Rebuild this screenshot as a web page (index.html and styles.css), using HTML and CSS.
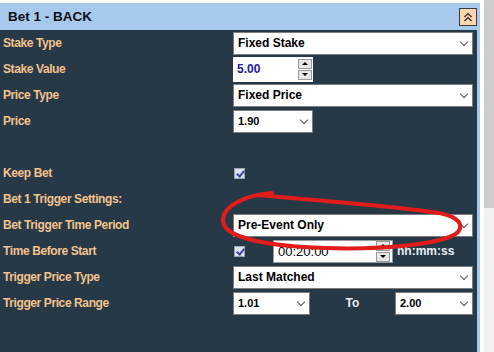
FILE: index.html
```html
<!DOCTYPE html>
<html lang="en">
<head>
    <meta charset="UTF-8">
    <title>Bet 1 - BACK</title>
    <link rel="stylesheet" href="styles.css">
</head>
<body>

    <div class="page">
        <div class="panel">
            <div class="panel-head">
                <span class="panel-title">Bet 1 - BACK</span>
                <span class="collapse-btn">
                    <svg width="10" height="12" viewBox="0 0 10 12"><path d="M1.5 6 L5 2.5 L8.5 6 M1.5 10 L5 6.5 L8.5 10" fill="none" stroke="#222" stroke-width="1.2"/></svg>
                </span>
            </div>

            <div class="panel-body">
                <div class="row">
                    <div class="label">Stake Type</div>
                    <div class="field"><div class="select wide">Fixed Stake<span class="chev"></span></div></div>
                </div>
                <div class="row">
                    <div class="label">Stake Value</div>
                    <div class="field">
                        <div class="number">
                            <span class="num-value">5.00</span>
                            <span class="spin">
                                <span class="spin-btn"><span class="tri up"></span></span>
                                <span class="spin-btn"><span class="tri down"></span></span>
                            </span>
                        </div>
                    </div>
                </div>
                <div class="row">
                    <div class="label">Price Type</div>
                    <div class="field"><div class="select wide">Fixed Price<span class="chev"></span></div></div>
                </div>
                <div class="row">
                    <div class="label">Price</div>
                    <div class="field"><div class="select small">1.90<span class="chev"></span></div></div>
                </div>
                <div class="row"></div>
                <div class="row">
                    <div class="label">Keep Bet</div>
                    <div class="field"><span class="check"></span></div>
                </div>
                <div class="row">
                    <div class="label">Bet 1 Trigger Settings:</div>
                </div>
                <div class="row">
                    <div class="label">Bet Trigger Time Period</div>
                    <div class="field"><div class="select wide">Pre-Event Only<span class="chev"></span></div></div>
                </div>
                <div class="row">
                    <div class="label">Time Before Start</div>
                    <div class="field">
                        <span class="check"></span>
                        <div class="time">
                            <span class="time-value">00:20:00</span>
                            <span class="spin">
                                <span class="spin-btn"><span class="tri up"></span></span>
                                <span class="spin-btn"><span class="tri down"></span></span>
                            </span>
                        </div>
                        <span class="hint">hh:mm:ss</span>
                    </div>
                </div>
                <div class="row">
                    <div class="label">Trigger Price Type</div>
                    <div class="field"><div class="select wide">Last Matched<span class="chev"></span></div></div>
                </div>
                <div class="row">
                    <div class="label">Trigger Price Range</div>
                    <div class="field">
                        <div class="select range">1.01<span class="chev"></span></div>
                        <span class="to">To</span>
                        <div class="select range-end">2.00<span class="chev"></span></div>
                    </div>
                </div>
            </div>
        </div>
        <div class="gutter"></div>
        <div class="scrollbar"><div class="thumb"></div></div>
    </div>

    <!-- hand-drawn annotation -->
    <svg class="scribble" width="494" height="352" viewBox="0 0 494 352">
        <path d="M272 193 C244 195 222 207 223 221 C224 238 268 246 325 248 C382 250 446 244 458 232 C466 222 452 214 432 212 C382 205 322 201 258 195"
              fill="none" stroke="#e21b1b" stroke-width="4" stroke-linecap="round"/>
    </svg>

</body>
</html>
```

FILE: styles.css
```css
body {
    margin: 0;
    font-family: "Liberation Sans", Arial, sans-serif;
    background: #fff;
    width: 494px;
    height: 352px;
    overflow: hidden;
    position: relative;
}
.page {
    display: flex;
    height: 352px;
}
.panel {
    width: 477px;
    margin-top: 3px;
    border-right: 3px solid #a8c9ee;
    background: #273947;
    display: flex;
    flex-direction: column;
}
.panel-head {
    height: 27px;
    background: #a8c9ee;
    display: flex;
    align-items: center;
    justify-content: space-between;
    padding: 0 3px 0 8px;
    margin-right: -3px;
}
.panel-title {
    font-size: 13.5px;
    font-weight: bold;
    color: #111;
}
.collapse-btn {
    width: 16px;
    height: 16px;
    border: 1px solid #3c3c3c;
    background: #fdd5b0;
    display: flex;
    align-items: center;
    justify-content: center;
}
.panel-body {
    display: flex;
    flex-direction: column;
}
.row {
    height: 26px;
    display: flex;
    align-items: center;
}
.label {
    width: 230px;
    padding-left: 3px;
    font-size: 12px;
    letter-spacing: -0.4px;
    font-weight: bold;
    color: #f3c38e;
}
.field {
    display: flex;
    align-items: center;
    height: 26px;
}
.select {
    box-sizing: border-box;
    height: 23px;
    background: #fff;
    border: 1px solid #7c7c7c;
    padding-left: 4px;
    display: flex;
    align-items: center;
    font-size: 12px;
    font-weight: bold;
    color: #000;
    position: relative;
}
.select.wide { width: 240px; }
.select.small { width: 80px; font-size: 11px; }
.select.range { width: 77px; font-size: 11px; }
.select.range-end { width: 78px; font-size: 11px; }
.chev {
    position: absolute;
    right: 5px;
    top: 6px;
    width: 5px;
    height: 5px;
    border-right: 1px solid #555;
    border-bottom: 1px solid #555;
    transform: rotate(45deg);
}
.number {
    box-sizing: border-box;
    width: 80px;
    height: 25px;
    background: #fff;
    display: flex;
    align-items: center;
    justify-content: space-between;
    padding: 0 1px 0 4px;
}
.num-value {
    font-size: 12px;
    font-weight: bold;
    color: #1f1a9a;
}
.spin {
    display: flex;
    flex-direction: column;
    gap: 1px;
}
.spin-btn {
    box-sizing: border-box;
    width: 14px;
    height: 10px;
    border: 1px solid #9a9a9a;
    background: #e6e6e6;
    display: flex;
    align-items: center;
    justify-content: center;
}
.tri {
    width: 0;
    height: 0;
    border-left: 3px solid transparent;
    border-right: 3px solid transparent;
}
.tri.up { border-bottom: 3px solid #000; }
.tri.down { border-top: 3px solid #000; }
.check {
    box-sizing: border-box;
    width: 11px;
    height: 11px;
    margin-left: 1px;
    border: 1px solid #9aa3b5;
    background: #dfe3ea;
    position: relative;
}
.check::after {
    content: "";
    position: absolute;
    left: 3px;
    top: 0;
    width: 3px;
    height: 6px;
    border-right: 2px solid #3848a0;
    border-bottom: 2px solid #3848a0;
    transform: rotate(40deg);
}
.time {
    box-sizing: border-box;
    width: 120px;
    height: 23px;
    margin-left: 28px;
    background: #fff;
    border: 1px solid #9a9a9a;
    display: flex;
    align-items: center;
    justify-content: space-between;
    padding: 0 2px 0 4px;
}
.time-value {
    font-size: 13px;
    color: #000;
}
.hint {
    margin-left: 4px;
    font-size: 12px;
    font-weight: bold;
    color: #e8edf2;
}
.to {
    width: 85px;
    text-align: center;
    font-size: 12px;
    font-weight: bold;
    color: #e8edf2;
}
.gutter {
    width: 4px;
    background: #fff;
}
.scrollbar {
    width: 10px;
    background: #f0f0f0;
}
.thumb {
    height: 208px;
    background: #cdcdcd;
}
.scribble {
    position: absolute;
    left: 0;
    top: 0;
    pointer-events: none;
}
```
